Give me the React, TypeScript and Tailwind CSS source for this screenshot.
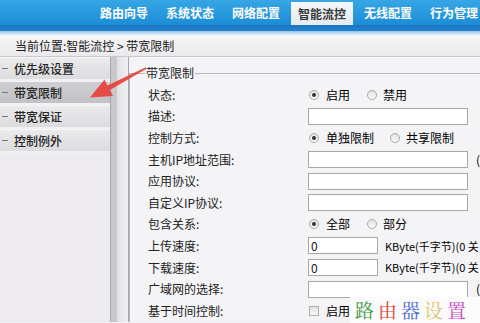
import React from "react";

const F = "font-['Noto_Sans_CJK_SC','Liberation_Sans',sans-serif]";

function Radio({ checked }: { checked?: boolean }) {
  return (
    <span className="flex h-[10px] w-[10px] items-center justify-center rounded-full border border-[#a9a9a9] bg-gradient-to-b from-[#e4e4e4] to-[#fafafa]">
      {checked && <span className="h-[4px] w-[4px] rounded-full bg-[#333]" />}
    </span>
  );
}

function RadioPair({ a, b, gap }: { a: string; b: string; gap: string }) {
  return (
    <div className="flex items-center pl-[1px]">
      <Radio checked />
      <span className="ml-[7px]">{a}</span>
      <span className={gap} />
      <Radio />
      <span className="ml-[6px]">{b}</span>
    </div>
  );
}

function Input({ w = "w-[160px]", value }: { w?: string; value?: string }) {
  return (
    <div className={`${w} flex h-[17px] items-center border border-[#a8a8a8] bg-white pl-[2px] text-[12px] leading-none text-[#111]`}>
      {value}
    </div>
  );
}

function Row({ label, children }: { label: string; children: React.ReactNode }) {
  return (
    <div className="flex h-[21.6px] items-center">
      <div className="w-[160px] shrink-0 text-[#222]">{label}</div>
      <div className="flex items-center whitespace-nowrap">{children}</div>
    </div>
  );
}

export default function App() {
  const nav = ["路由向导", "系统状态", "网络配置", "智能流控", "无线配置", "行为管理"];
  const side = ["优先级设置", "带宽限制", "带宽保证", "控制例外"];
  return (
    <div className={`relative h-[323px] w-[480px] overflow-hidden bg-[#f3f2f4] text-[12px] ${F}`}>
      {/* header */}
      <div className="h-[25px] bg-gradient-to-b from-[#36a6e6] to-[#1b8dd6]">
        <div className="flex h-full pl-[91px]">
          {nav.map((n, i) =>
            i === 3 ? (
              <div key={n} className="mx-[2px] mt-[2px] flex w-[62px] shrink-0 items-center justify-center bg-gradient-to-b from-[#f4f7f9] to-[#e3ebf0] font-bold text-[#3a3a3a]">
                {n}
              </div>
            ) : (
              <div key={n} className="flex w-[66px] shrink-0 items-center justify-center font-bold text-white">
                {n}
              </div>
            )
          )}
        </div>
      </div>
      <div className="h-[6px] bg-gradient-to-b from-[#1a74c2] to-[#2583cc]" />
      <div className="h-[5px] bg-gradient-to-b from-[#8ec5ea] to-[#fbfbfc]" />
      {/* breadcrumb */}
      <div className="flex h-[21px] items-center border-b border-[#c9c9cb] bg-gradient-to-b from-[#f7f6f7] to-[#ebe9eb] pl-[15px] text-[#1a1a1a]">
        当前位置:智能流控 &gt; 带宽限制
      </div>
      {/* main */}
      <div className="flex h-[265px]">
        {/* sidebar */}
        <div className="flex w-[110px] shrink-0 flex-col bg-[#edebed]">
          {side.map((s, i) => (
            <div
              key={s}
              className={`flex h-[24px] items-center border-t border-b-[2px] border-t-[#f6f6f7] border-b-[#f0eff1] ${
                i === 1
                  ? "bg-gradient-to-b from-[#cfced2] to-[#c2c1c5]"
                  : "bg-gradient-to-b from-[#ebebed] to-[#dcdbde]"
              }`}
            >
              <span className="ml-[2px] h-[1px] w-[6px] bg-[#777]" />
              <span className="ml-[6px] font-medium text-[#262626]">{s}</span>
            </div>
          ))}
        </div>
        <div className="w-[7px] shrink-0 border-l border-[#a9a9ad] bg-[#c8c8cc]" />
        <div className="w-[11px] shrink-0 bg-gradient-to-r from-[#e2e2e4] to-[#f0f0f2]" />
        {/* content */}
        <div className="flex-1 border-l border-[#a6a6aa] bg-[#f4f4f6] pt-[7px]">
          <fieldset className="border-t border-l border-[#b9b9bc]">
            <legend className="ml-[15px] px-[1px] text-[#222]">带宽限制</legend>
            <div className="mt-[2px] pl-[18px]">
              <Row label="状态:">
                <RadioPair a="启用" b="禁用" gap="w-[17px]" />
              </Row>
              <Row label="描述:">
                <Input />
              </Row>
              <Row label="控制方式:">
                <RadioPair a="单独限制" b="共享限制" gap="w-[16px]" />
              </Row>
              <Row label="主机IP地址范围:">
                <Input />
                <span className="ml-[8px]">(</span>
              </Row>
              <Row label="应用协议:">
                <Input />
              </Row>
              <Row label="自定义IP协议:">
                <Input />
              </Row>
              <Row label="包含关系:">
                <RadioPair a="全部" b="部分" gap="w-[17px]" />
              </Row>
              <Row label="上传速度:">
                <Input w="w-[70px]" value="0" />
                <span className="ml-[7px] text-[11px]">KByte(千字节)(0 关</span>
              </Row>
              <Row label="下载速度:">
                <Input w="w-[70px]" value="0" />
                <span className="ml-[7px] text-[11px]">KByte(千字节)(0 关</span>
              </Row>
              <Row label="广域网的选择:">
                <Input />
                <span className="ml-[8px]">(</span>
              </Row>
              <Row label="基于时间控制:">
                <span className="ml-[1px] h-[10px] w-[10px] border border-[#b0b0b0] bg-gradient-to-b from-[#e2e2e2] to-[#f8f8f8]" />
                <span className="ml-[7px]">启用</span>
              </Row>
            </div>
          </fieldset>
        </div>
      </div>
      {/* watermark */}
      <div className="absolute bottom-0 left-[350px] flex h-[26px] w-[130px] items-center gap-[4px] bg-[#fbfbfb] pl-[5px] text-[19px] font-['Noto_Serif_CJK_SC','Noto_Sans_CJK_SC',serif]">
        <span className="text-[#3c9a42]">路</span>
        <span className="text-[#e23a36]">由</span>
        <span className="text-[#4b6bd6]">器</span>
        <span className="text-[#dcc46a]">设</span>
        <span className="text-[#c64cc4]">置</span>
      </div>
      {/* red arrow */}
      <svg className="pointer-events-none absolute left-0 top-0" width="480" height="323">
        <polygon
          points="90,97.5 104.5,79.5 107.5,85.5 145.7,67.2 146.5,68.8 109.9,90 113,96"
          fill="#e8413c"
          opacity="0.92"
        />
      </svg>
    </div>
  );
}
